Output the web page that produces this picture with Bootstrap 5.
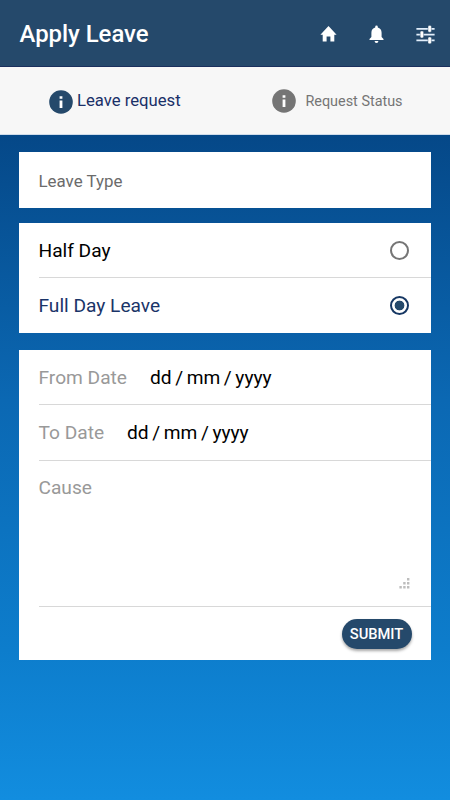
<!DOCTYPE html>
<html lang="en">
<head>
<meta charset="utf-8">
<meta name="viewport" content="width=device-width, initial-scale=1">
<title>Apply Leave</title>
<link href="https://cdn.jsdelivr.net/npm/bootstrap@5.3.0/dist/css/bootstrap.min.css" rel="stylesheet">
<style>
:root { --brand: #25496b; --navy: #1a3468; }
body { font-family: Roboto, "Liberation Sans", sans-serif; font-size: 19.15px; line-height: 24px; color: #000; background: linear-gradient(#054888 135px, #0b68b3 400px, #0d7dcc 650px, #128ddf 800px); height: 800px; overflow: hidden; }
svg { display: block; flex: none; }
.topbar { height: 67px; background: var(--brand); border-bottom: 1px solid #1a2f5d; padding: 2px 15px 0 19.5px; }
.topbar h1 { font-size: 23.9px; font-weight: 500; line-height: 30px; }
.tools { gap: 32px; }
.tabs { height: 68px; background: #f7f7f7; border-bottom: 1px solid #cfdcea; }
.tab-on { color: #1a3068; font-size: 16.7px; padding-left: 4.5px; gap: 4px; }
.tab-on svg { margin-top: 2px; }
.tab-off { color: #757575; font-size: 14.4px; gap: 9px; }
.tab-off span { padding-top: 2px; }
.panel { margin: 0 19px; background: #fff; padding-left: 19.5px; }
.kind { height: 56px; margin-top: 17px; margin-bottom: 15px; padding-top: 1px; font-size: 16.9px; color: #6b6b6b; }
.dates { margin-top: 17px; }
.line { height: 55px; padding-right: 22px; }
.half { padding-top: 1px; }
.send-row { height: 53px; padding-right: 19.5px; }
.full { color: var(--navy); }
.ymd { word-spacing: -1.15px; }
.ruled { border-bottom: 1px solid #d8d8d8; }
.hint { color: #999; }
.pair { gap: 23px; height: 55px; }
.pair + .pair { height: 56px; }
.pair span { padding-top: 1px; }
.pick { width: 19px; height: 19px; border: 2.4px solid #757575; border-radius: 50%; }
.pick-on { border-color: #163763; background: radial-gradient(circle, var(--brand) 4.6px, #fff 5.2px); }
.cause { height: 146px; padding: 15px 21px 17px 0; }
.send { width: 70px; height: 30px; border-radius: 15px; background: var(--brand); color: #fff; font-size: 14.7px; font-weight: 500; box-shadow: 0 2px 3px rgba(0,0,0,.35); }
</style>
</head>
<body>
<header class="topbar d-flex align-items-center justify-content-between text-white">
  <h1 class="m-0">Apply Leave</h1>
  <nav class="tools d-flex align-items-center">
    <svg width="17" height="18" viewBox="0 0 17 18" fill="#fff"><path d="M6.6 16.6v-5.2h3.8v5.2h3.9V9.8h2.3L8.5 1 .4 9.8h2.3v6.8z"/></svg>
    <svg width="15" height="18" viewBox="0 0 15 18" fill="#fff"><path d="M5.6 16h3.8a1.9 1.9 0 0 1-3.8 0zM12.6 12V7.7c0-2.6-1.5-4.6-3.8-5.2v-.6a1.3 1.3 0 0 0-2.6 0v.6c-2.3.6-3.8 2.6-3.8 5.2V12L.5 14v1h14v-1z"/></svg>
    <svg width="19" height="19" viewBox="0 0 19 19"><g fill="#e2eefb"><path d="M.4 3h18.2v1.7H.4zM.4 8.7h18.2v1.7H.4zM.4 14.6h18.2v1.7H.4z"/></g><g fill="#fff" stroke="#25496b" stroke-width=".4"><rect x="12" y=".4" width="3.4" height="6.8" rx="1.3"/><rect x="4.2" y="6.1" width="3.4" height="6.8" rx="1.3"/><rect x="12" y="12" width="3.4" height="6.8" rx="1.3"/></g></svg>
  </nav>
</header>

<div class="tabs d-flex">
  <div class="tab-on w-50 d-flex align-items-center justify-content-center">
    <svg width="24" height="24" viewBox="0 0 24 24"><circle cx="12" cy="12" r="11.8" fill="#25496b"/><path fill="#fff" d="M10.6 6.3h2.8v2.5h-2.8zM10.6 10.6h2.8V18h-2.8z"/></svg>
    <span>Leave request</span>
  </div>
  <div class="tab-off w-50 d-flex align-items-center justify-content-center">
    <svg width="24" height="24" viewBox="0 0 24 24"><circle cx="12" cy="12" r="11.8" fill="#757575"/><path fill="#fff" d="M10.6 6.3h2.8v2.5h-2.8zM10.6 10.6h2.8V18h-2.8z"/></svg>
    <span>Request Status</span>
  </div>
</div>

<main>
  <div class="panel kind d-flex align-items-center">Leave Type</div>

  <div class="panel">
    <div class="line ruled d-flex align-items-center justify-content-between"><span class="half">Half Day</span><span class="pick"></span></div>
    <div class="line d-flex align-items-center justify-content-between"><span class="full">Full Day Leave</span><span class="pick pick-on"></span></div>
  </div>

  <div class="panel dates">
    <div class="pair ruled d-flex align-items-center"><span class="hint">From Date</span><span class="ymd">dd / mm / yyyy</span></div>
    <div class="pair ruled d-flex align-items-center"><span class="hint">To Date</span><span class="ymd">dd / mm / yyyy</span></div>
    <div class="cause ruled d-flex justify-content-between">
      <span class="hint">Cause</span>
      <svg class="align-self-end" width="11" height="11" viewBox="0 0 11 11" fill="#bdbdbd"><path d="M8 0h2.4v2.4H8zM4.2 4h2.4v2.4H4.2zM8 4h2.4v2.4H8zM.4 8h2.4v2.4H.4zM4.2 8h2.4v2.4H4.2zM8 8h2.4v2.4H8z"/></svg>
    </div>
    <div class="send-row d-flex align-items-center justify-content-end"><button class="send border-0 p-0">SUBMIT</button></div>
  </div>
</main>
<script src="https://cdn.jsdelivr.net/npm/bootstrap@5.3.0/dist/js/bootstrap.bundle.min.js"></script>
</body>
</html>
